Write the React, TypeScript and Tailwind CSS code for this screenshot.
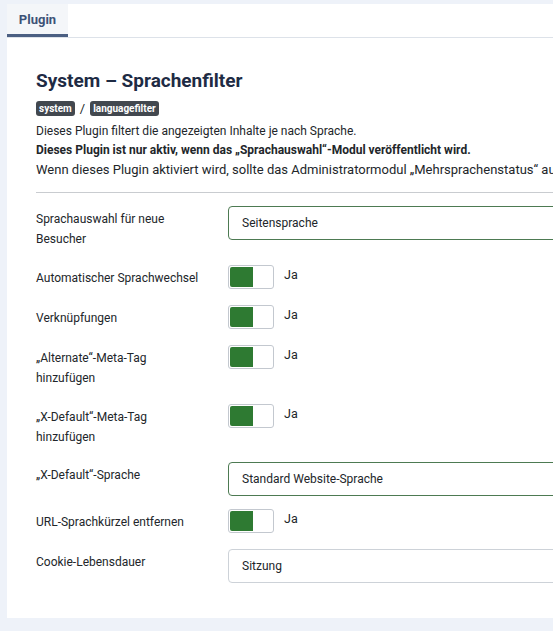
import React from "react"

type Row =
  | { kind: "select"; label: string; value: string; valid?: boolean; mt: string }
  | { kind: "toggle"; label: string; mt: string }

const rows: Row[] = [
  { kind: "select", label: "Sprachauswahl für neue Besucher", value: "Seitensprache", valid: true, mt: "mt-[13px]" },
  { kind: "toggle", label: "Automatischer Sprachwechsel", mt: "mt-[16px]" },
  { kind: "toggle", label: "Verknüpfungen", mt: "mt-[16px]" },
  { kind: "toggle", label: "„Alternate“-Meta-Tag hinzufügen", mt: "mt-[16px]" },
  { kind: "toggle", label: "„X-Default“-Meta-Tag hinzufügen", mt: "mt-[16px]" },
  { kind: "select", label: "„X-Default“-Sprache", value: "Standard Website-Sprache", valid: true, mt: "mt-[15px]" },
  { kind: "toggle", label: "URL-Sprachkürzel entfernen", mt: "mt-[13px]" },
  { kind: "select", label: "Cookie-Lebensdauer", value: "Sitzung", mt: "mt-[16px]" },
]

function Toggle() {
  return (
    <div className="flex items-center gap-[10px] self-start">
      <div className="flex h-[24px] w-[46px] rounded-[3px] border border-[#c3c8cf] bg-white p-px">
        <div className="h-full w-[23px] rounded-l-[2px] bg-[#2e7a32]" />
      </div>
      <span className="-mt-[4px] text-[12.5px] text-[#22262a]">Ja</span>
    </div>
  )
}

export default function App() {
  return (
    <div
      className="h-[631px] w-full overflow-hidden bg-[#eef2f9] pt-[4px] pl-[7px]"
      style={{ fontFamily: "Roboto, 'Noto Sans', sans-serif" }}
    >
      <div className="h-[614px] w-[620px] bg-white">
        {/* Tabs */}
        <div className="flex h-[34px] border-b border-[#dde2e9]">
          <div className="flex w-[61px] items-center justify-center border-b-[3px] border-[#4b5f82] bg-[#f4f6f9] pt-[2px] text-[13px] font-bold text-[#3d5277]">
            Plugin
          </div>
        </div>

        <div className="pl-[29px] pt-[31px]">
          <h1 className="text-[19px] leading-[24px] font-bold text-[#1e2b44]">System – Sprachenfilter</h1>
          <div className="mt-[8px] flex items-center gap-[5px] text-[13px] text-[#22262a]">
            <span className="rounded-[3px] bg-[#42484f] px-[3px] text-[10px] leading-[15px] font-bold text-white">system</span>
            <span className="leading-[15px]">/</span>
            <span className="rounded-[3px] bg-[#42484f] px-[3px] text-[10px] leading-[15px] font-bold text-white">languagefilter</span>
          </div>
          <div className="mt-[6px] text-[12px] leading-[19px] whitespace-nowrap text-[#22262a]">
            <p>Dieses Plugin filtert die angezeigten Inhalte je nach Sprache.</p>
            <p className="font-bold">Dieses Plugin ist nur aktiv, wenn das „Sprachauswahl“-Modul veröffentlicht wird.</p>
            <p className="text-[13px]">Wenn dieses Plugin aktiviert wird, sollte das Administratormodul „Mehrsprachenstatus“ auch veröffentlicht werden.</p>
          </div>
          <hr className="mt-[13px] border-t border-[#c9ccd0]" />

          {rows.map((row, i) => (
            <div key={i} className={`flex items-start ${row.mt}`}>
              <label className="w-[192px] shrink-0 pr-[24px] pt-[3px] text-[12px] leading-[20px] text-[#22262a]">
                {row.label}
              </label>
              {row.kind === "select" ? (
                <div
                  className={`flex h-[34px] w-[400px] items-center rounded-[4px] border px-[13px] text-[12px] text-[#22262a] ${
                    row.valid ? "border-[#4d7a52]" : "border-[#cdd2d8]"
                  }`}
                >
                  {row.value}
                </div>
              ) : (
                <Toggle />
              )}
            </div>
          ))}
        </div>
      </div>
    </div>
  )
}
